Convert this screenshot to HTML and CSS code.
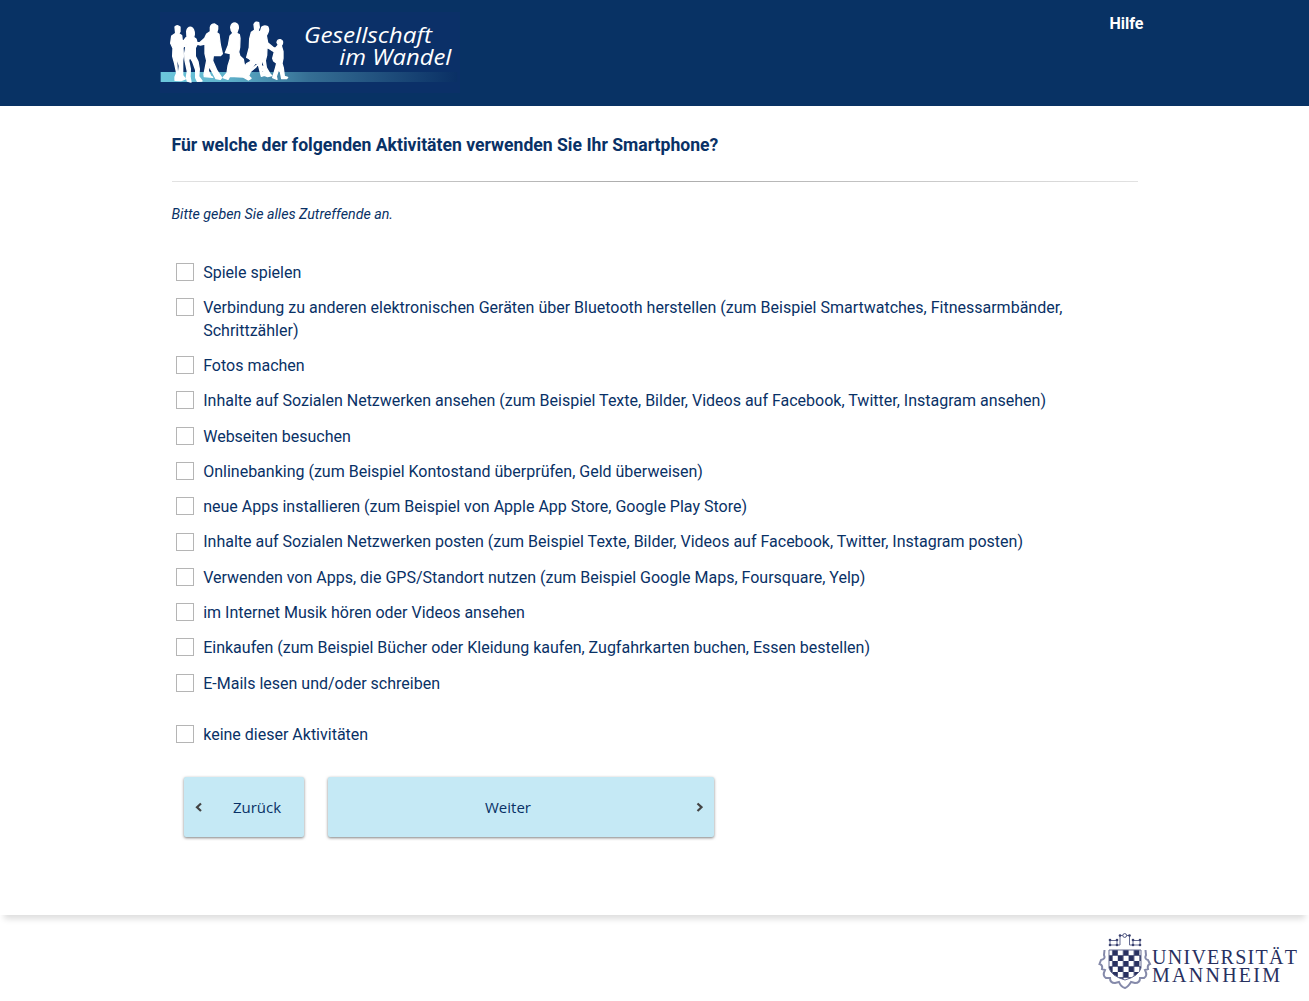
FILE: index.html
```html
<!DOCTYPE html>
<html lang="de">
<head>
<meta charset="utf-8">
<title>Gesellschaft im Wandel</title>
<link rel="stylesheet" href="styles.css">
</head>
<body>
<header class="header">
  <div class="header-inner">
    <svg class="brand" viewBox="15 12 900 243" role="img" aria-label="Gesellschaft im Wandel">
      <defs>
        <linearGradient id="band"><stop offset="0" stop-color="#6cc7dc"/><stop offset=".22" stop-color="#5fb2cb"/><stop offset=".5" stop-color="#356e94"/><stop offset="1" stop-color="#0a3065"/></linearGradient>
      </defs>
      <rect class="brand-bg" x="15" y="12" width="900" height="243"/>
      <rect x="17" y="192" width="890" height="30" fill="url(#band)"/>
      <g class="people">
        <path d="M60 57Q66 49 75 57L75 71 71 77 80 83 82 99 88 96 93 89 96 88 95 70Q98 56 109 58 118 62 118 79L116 88 123 93 126 103 134 104 149 91 155 78 166 71 166 58Q168 48 179 48L188 54 188 63 185 74 192 79 196 111 202 137 196 143 175 143 173 158 186 188 200 209 196 214 183 212 175 197 162 174 160 188 167 204 173 208 148 206 147 199 155 158 150 137 150 108 136 111 127 108 121 120 121 145 129 161 133 183 131 205 141 219 127 220 122 209 122 186 113 161 104 147 101 158 106 183 105 206 108 222 97 219 94 208 97 190 90 158 89 136 94 108 84 119 85 145 83 159 83 202 91 213 78 218 60 217 60 207 65 195 59 167 53 145 54 121 47 106 50 84 62 76Z"/>
        <path d="M227 58Q229 45 240 45 251 48 250 61L247 70 245 76 253 80 255 91 254 118 251 132 255 145 265 154 267 165 269 175 275 167 289 159 281 151 275 148 283 118 284 93 289 73 299 66 297 49Q303 39 311 44L313 58 309 68 316 72 320 58Q327 51 338 56 343 64 339 73L334 83 338 104 356 119 362 120 370 111 366 103Q368 94 376 95 385 97 382 108L379 113 384 130 384 151 381 166 385 180 388 205 398 208 395 212 380 212 376 191 370 187 364 205 366 214 353 209 355 202 362 178 365 166 356 159 353 151 358 132 343 122 336 118 335 142 331 158 334 179 344 196 350 203 338 206 328 202 321 180 319 190 326 203 319 205 309 166 303 177 286 191 281 204 288 211 280 216 264 207 224 205 219 214 204 209 216 195 219 174 226 151 226 137 211 134 220 112 225 84 234 75 229 68Z"/>
      </g>
      <g class="gaps">
        <path d="M67 160L71 174 69 190ZM290 183L302 168 306 168 294 178ZM325 175L323 162 321 171Z"/>
      </g>
      <g class="brand-text">
        <text x="447" y="104" textLength="384" lengthAdjust="spacingAndGlyphs">Gesellschaft</text>
        <text x="553" y="172" textLength="336" lengthAdjust="spacingAndGlyphs">im Wandel</text>
      </g>
    </svg>
    <a class="help">Hilfe</a>
  </div>
</header>
<div class="page">
<main class="main">
  <h1 class="question">Für welche der folgenden Aktivitäten verwenden Sie Ihr Smartphone?</h1>
  <div class="rule"></div>
  <p class="hint">Bitte geben Sie alles Zutreffende an.</p>
  <div class="options">
    <label class="option"><input type="checkbox" class="box"><span>Spiele spielen</span></label>
    <label class="option"><input type="checkbox" class="box"><span>Verbindung zu anderen elektronischen Geräten über Bluetooth herstellen (zum Beispiel Smartwatches, Fitnessarmbänder, Schrittzähler)</span></label>
    <label class="option"><input type="checkbox" class="box"><span>Fotos machen</span></label>
    <label class="option"><input type="checkbox" class="box"><span>Inhalte auf Sozialen Netzwerken ansehen (zum Beispiel Texte, Bilder, Videos auf Facebook, Twitter, Instagram ansehen)</span></label>
    <label class="option"><input type="checkbox" class="box"><span>Webseiten besuchen</span></label>
    <label class="option"><input type="checkbox" class="box"><span>Onlinebanking (zum Beispiel Kontostand überprüfen, Geld überweisen)</span></label>
    <label class="option"><input type="checkbox" class="box"><span>neue Apps installieren (zum Beispiel von Apple App Store, Google Play Store)</span></label>
    <label class="option"><input type="checkbox" class="box"><span>Inhalte auf Sozialen Netzwerken posten (zum Beispiel Texte, Bilder, Videos auf Facebook, Twitter, Instagram posten)</span></label>
    <label class="option"><input type="checkbox" class="box"><span>Verwenden von Apps, die GPS/Standort nutzen (zum Beispiel Google Maps, Foursquare, Yelp)</span></label>
    <label class="option"><input type="checkbox" class="box"><span>im Internet Musik hören oder Videos ansehen</span></label>
    <label class="option"><input type="checkbox" class="box"><span>Einkaufen (zum Beispiel Bücher oder Kleidung kaufen, Zugfahrkarten buchen, Essen bestellen)</span></label>
    <label class="option"><input type="checkbox" class="box"><span>E-Mails lesen und/oder schreiben</span></label>
    <label class="option option-none"><input type="checkbox" class="box"><span>keine dieser Aktivitäten</span></label>
  </div>
  <div class="actions">
    <button class="btn btn-back"><svg class="chevron" viewBox="0 0 8 10"><path d="M6 1.500L2 5.200 6 9"/></svg><span class="btn-label">Zurück</span></button>
    <button class="btn btn-next"><span class="btn-label">Weiter</span><svg class="chevron" viewBox="0 0 8 10"><path d="M2.500 1.500L6.500 5.200 2.500 9"/></svg></button>
  </div>
</main>
</div>
<footer class="footer">
  <svg class="uni" viewBox="0 0 219 72" role="img" aria-label="Universität Mannheim">
    <defs>
      <pattern id="check" x="17" y="21" width="10.800" height="11" patternUnits="userSpaceOnUse"><path d="M5.200 0h5.800v5.700H5.200zM0 5.300h5.600V11H0z" fill="#28305f"/></pattern>
    </defs>
    <path class="crest-frame" d="M14.500 21L14 26Q16 30 11 31L9.500 35Q13 36 12 40L15 41Q12 47 16 49L20 49Q20 54 25 54L29 53Q31 58 35 59 38 58 41 53L45 54Q50 54 50 49L54 49Q58 47 55 41L58 40Q57 36 60 35L58 31Q54 30 56 26L55.500 21"/>
    <path d="M19 21H51V39Q49 47 35 51 21 47 19 39Z" fill="url(#check)"/>
    <path class="crest-line" d="M19 21H51V39Q49 47 35 51 21 47 19 39ZM20 16V11M19 11.500H27V16M20 16H30V6.500H39.500V16H50V11M43 16V11.500H51"/>
    <g class="crest-dots"><circle cx="20" cy="11" r="1.300"/><circle cx="27" cy="11" r="1.300"/><circle cx="20" cy="16" r="1.300"/><circle cx="27" cy="16" r="1.300"/><circle cx="30" cy="6.500" r="1.300"/><circle cx="39.500" cy="6.500" r="1.300"/><circle cx="43" cy="11" r="1.300"/><circle cx="50" cy="11" r="1.300"/><circle cx="43" cy="16" r="1.300"/><circle cx="50" cy="16" r="1.300"/></g>
    <circle class="crest-ring" cx="34.700" cy="6.500" r="1.900"/>
    <g class="uni-text">
      <text x="62" y="35" textLength="145" lengthAdjust="spacing">UNIVERSITÄT</text>
      <text x="62" y="53" textLength="128" lengthAdjust="spacing">MANNHEIM</text>
    </g>
  </svg>
</footer>
</body>
</html>
```
FILE: styles.css
```css
* { box-sizing: border-box; }
body {
  margin: 0;
  background: #fff;
  color: #093166;
  font-family: Roboto, sans-serif;
  font-size: 16px;
  line-height: 23px;
}
.header { height: 106px; background: #083264; }
.header-inner {
  width: 989px;
  margin: 0 auto;
  padding: 12px 5.500px 0 0;
  display: flex;
  justify-content: space-between;
  align-items: flex-start;
}
.brand { width: 300px; height: 81px; }
.brand-bg { fill: #0b3068; }
.people { fill: #fff; stroke: #fff; stroke-width: 4; stroke-linejoin: round; }
.gaps { fill: #0b3068; }
.brand-text {
  fill: #fff;
  font: italic 64px "Open Sans", sans-serif;
}
.help { color: #fff; font-weight: 700; }
.page { height: 809px; box-shadow: 0 8px 6px -4px #dedede; }
.main { width: 966px; margin: 0 auto; padding-top: 27px; }
.question { margin: 0; font-size: 17.6px; line-height: 24px; font-weight: 700; }
.rule {
  height: 1px;
  margin-top: 24px;
  background: linear-gradient(90deg, #e2e2e2, #aaa 50%, #e2e2e2);
}
.hint { margin: 20px 0 0; font-size: 14.24px; font-style: italic; line-height: 24px; }
.options {
  width: 920px;
  margin-top: 34.5px;
  padding-left: 4.7px;
  display: flex;
  flex-direction: column;
  gap: 12.29px;
}
.option { display: flex; align-items: flex-start; gap: 9px; }
.option-none { margin-top: 16px; }
.box {
  appearance: none;
  flex: none;
  width: 18px;
  height: 18px;
  margin: 2.150px 0 0;
  border: 1px solid #b5b5b5;
  background: #fff;
}
.actions { display: flex; gap: 24px; margin: 31.1px 0 0 12.5px; }
.btn {
  display: flex;
  align-items: center;
  height: 60px;
  padding: 0 11px;
  border: 0;
  border-radius: 2px;
  background: #c5e9f5;
  color: #093166;
  font: 15px "Open Sans", sans-serif;
  box-shadow: 0 1px 3px rgba(0, 0, 0, .5);
}
.btn-back { width: 120px; }
.btn-next { width: 386px; }
.btn-label { flex: 1; text-align: center; }
.btn-back .btn-label { padding-left: 18px; }
.btn-next .btn-label { padding-right: 18px; }
.chevron { width: 8px; height: 10px; fill: none; stroke: #444; stroke-width: 2.2; }
.footer {
  height: 86px;
  display: flex;
  justify-content: flex-end;
  padding-top: 14px;
  overflow: hidden;
}
.uni { width: 219px; height: 72px; }
.crest-frame { fill: none; stroke: #858aaa; stroke-width: 2; }
.crest-line { fill: none; stroke: #646a91; stroke-width: 1; }
.crest-dots { fill: #3a4170; }
.crest-ring { fill: #fff; stroke: #4d5480; stroke-width: 1; }
.uni-text { fill: #28305f; font: 20px "Liberation Serif", serif; }
```
